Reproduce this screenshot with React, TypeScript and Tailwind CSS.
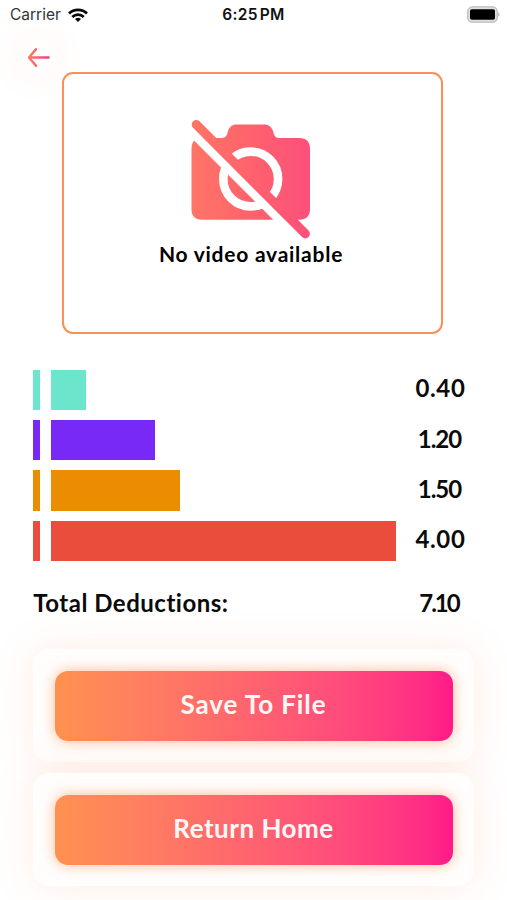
import React from 'react';

interface Deduction {
  value: string;
  color: string;
  tracking: string;
}

const BAR_UNIT = 86.3;

const deductions: Deduction[] = [
  { value: '0.40', color: 'bg-[#6be6cc]', tracking: 'tracking-[0.6px]' },
  { value: '1.20', color: 'bg-[#7829f5]', tracking: 'tracking-[-1px] pr-[2px]' },
  { value: '1.50', color: 'bg-[#ec8c00]', tracking: 'tracking-[-1px] pr-[2px]' },
  { value: '4.00', color: 'bg-[#ea4d3c]', tracking: 'tracking-[0.6px]' },
];

function StatusBar() {
  return (
    <header className="grid h-[30px] grid-cols-3 items-center pl-[10px] pr-[7px] font-['Inter',sans-serif] text-[16px] leading-none text-[#333]">
      <div className="flex items-center gap-[7px]">
        <span className="text-[15.5px]">Carrier</span>
        <svg width="20" height="15" viewBox="0 0 20 15" fill="none" stroke="#080808" strokeWidth="2.8">
          <path d="M1 5.6C6 .7 14 .7 19 5.6" />
          <path d="M4.3 9C7.6 5.8 12.4 5.8 15.7 9" />
          <path d="M7 10.9C8.7 9.4 11.3 9.4 13 10.9L10 14Z" fill="#080808" stroke="none" />
        </svg>
      </div>
      <span className="pr-[3px] text-center text-[15.5px] font-semibold tracking-[0.3px] text-[#111]">
        6:25<span className="ml-[2px]">PM</span>
      </span>
      <svg className="-mt-[2px] justify-self-end" width="33" height="17" viewBox="0 0 33 17">
        <rect x=".8" y=".8" width="29.4" height="15.4" rx="4.5" fill="#e0e0e0" stroke="#bdbdbd" strokeWidth="1.3" />
        <rect x="3" y="3.2" width="25" height="10.6" rx="1.8" fill="#000" />
        <path d="M31.3 6.5c1.6.4 1.6 3.6 0 4Z" fill="#aaa" />
      </svg>
    </header>
  );
}

function BackButton() {
  return (
    <button className="ml-[20px] mt-[9px] flex h-9 w-9 items-center justify-center rounded-2xl bg-[#fffefd] shadow-[0_0_32px_rgba(255,140,90,0.1)]">
      <svg width="24" height="22" viewBox="0 0 24 22" fill="none" stroke="url(#arrow)" strokeWidth="2.5" strokeLinecap="round" strokeLinejoin="round">
        <defs>
          <linearGradient id="arrow" gradientUnits="userSpaceOnUse" x1="2" y1="0" x2="23" y2="0">
            <stop offset="0" stopColor="#ff7d60" />
            <stop offset="1" stopColor="#e6408c" />
          </linearGradient>
        </defs>
        <path d="M22.5 11.5H3M10 3.2L3 11.5L10 19.8" />
      </svg>
    </button>
  );
}

function NoCameraIcon() {
  return (
    <svg className="mr-[3px]" width="120" height="120" viewBox="191 119 120 120" fill="none">
      <defs>
        <linearGradient id="camera" gradientUnits="userSpaceOnUse" x1="191" y1="0" x2="310" y2="0">
          <stop offset="0" stopColor="#ff7566" />
          <stop offset="0.5" stopColor="#ff626d" />
          <stop offset="1" stopColor="#fb507b" />
        </linearGradient>
      </defs>
      <path
        d="M202 138H222C226 138 227 135 228 131C229.5 127 232 124.5 236 124.5H264C269 124.5 271.5 127 273 131C274 135 275 138 279 138H299Q310 138 310 149V209Q310 219.7 299 219.7H202Q191.5 219.7 191.5 209V149Q191.5 138 202 138Z"
        fill="url(#camera)"
      />
      <circle cx="250.7" cy="179" r="27.4" stroke="#fff" strokeWidth="8.6" />
      {/* white gap that follows the slash */}
      <path d="M181 121.5L296 236.5" stroke="#fff" strokeWidth="8.6" />
      <path d="M196.3 124.6L305.3 233.8" stroke="url(#camera)" strokeWidth="9.2" strokeLinecap="round" />
    </svg>
  );
}

function VideoPlaceholder() {
  return (
    <section className="ml-[62px] -mt-[3px] flex h-[262px] w-[381px] flex-col items-center rounded-[11px] border-2 border-[#f99059] bg-white pt-[45px]">
      <NoCameraIcon />
      <p className="mt-[1px] whitespace-nowrap pr-[3px] text-[21px] font-bold leading-[28px] tracking-[0.75px] text-black">
        No video available
      </p>
    </section>
  );
}

function DeductionRow({ value, color, tracking }: Deduction) {
  return (
    <div className="flex h-[40.4px] items-center">
      <div className={`h-full w-[6.7px] ${color}`} />
      <div className="ml-[11px] h-full w-[356px]">
        <div className={`h-full ${color}`} style={{ width: Number(value) * BAR_UNIT }} />
      </div>
      <span className={`-mt-[3px] w-[67px] text-center ${tracking}`}>{value}</span>
    </div>
  );
}

function ActionButton({ label, tracking }: { label: string; tracking: string }) {
  return (
    <div className="flex h-[113px] items-center rounded-[16px] bg-[#fffefd] px-[21.5px] shadow-[0_0_40px_rgba(255,135,80,0.15)]">
      <button
        className={`h-[70.5px] w-full rounded-[13px] bg-linear-to-r from-[#ff9150] via-[#ff626f] to-[#ff1988] pb-[3px] text-[26px] font-bold text-[#fff8f6] shadow-[0_0_14px_rgba(255,125,65,0.55)] ${tracking}`}
      >
        {label}
      </button>
    </div>
  );
}

export default function App() {
  return (
    <main className="h-[900px] w-[507px] overflow-hidden bg-white font-['Lato',sans-serif] text-[#0b0b0b]">
      <StatusBar />
      <BackButton />
      <VideoPlaceholder />

      <section className="ml-[33.3px] mt-[35.7px] flex flex-col gap-[9.9px] text-[24px] font-bold leading-none">
        {deductions.map((item) => (
          <DeductionRow key={item.value} {...item} />
        ))}
      </section>

      <section className="ml-[33.3px] mt-[27px] flex h-[30px] items-center text-[24px] font-bold leading-none">
        <span className="w-[373.7px] whitespace-nowrap tracking-[0.5px]">Total Deductions:</span>
        <span className="w-[67px] pr-[3px] text-center tracking-[-2px]">7.10</span>
      </section>

      <section className="mx-[33px] mt-[31.5px] flex flex-col gap-[11px]">
        <ActionButton label="Save To File" tracking="tracking-[0.9px]" />
        <ActionButton label="Return Home" tracking="tracking-[0.5px]" />
      </section>
    </main>
  );
}
